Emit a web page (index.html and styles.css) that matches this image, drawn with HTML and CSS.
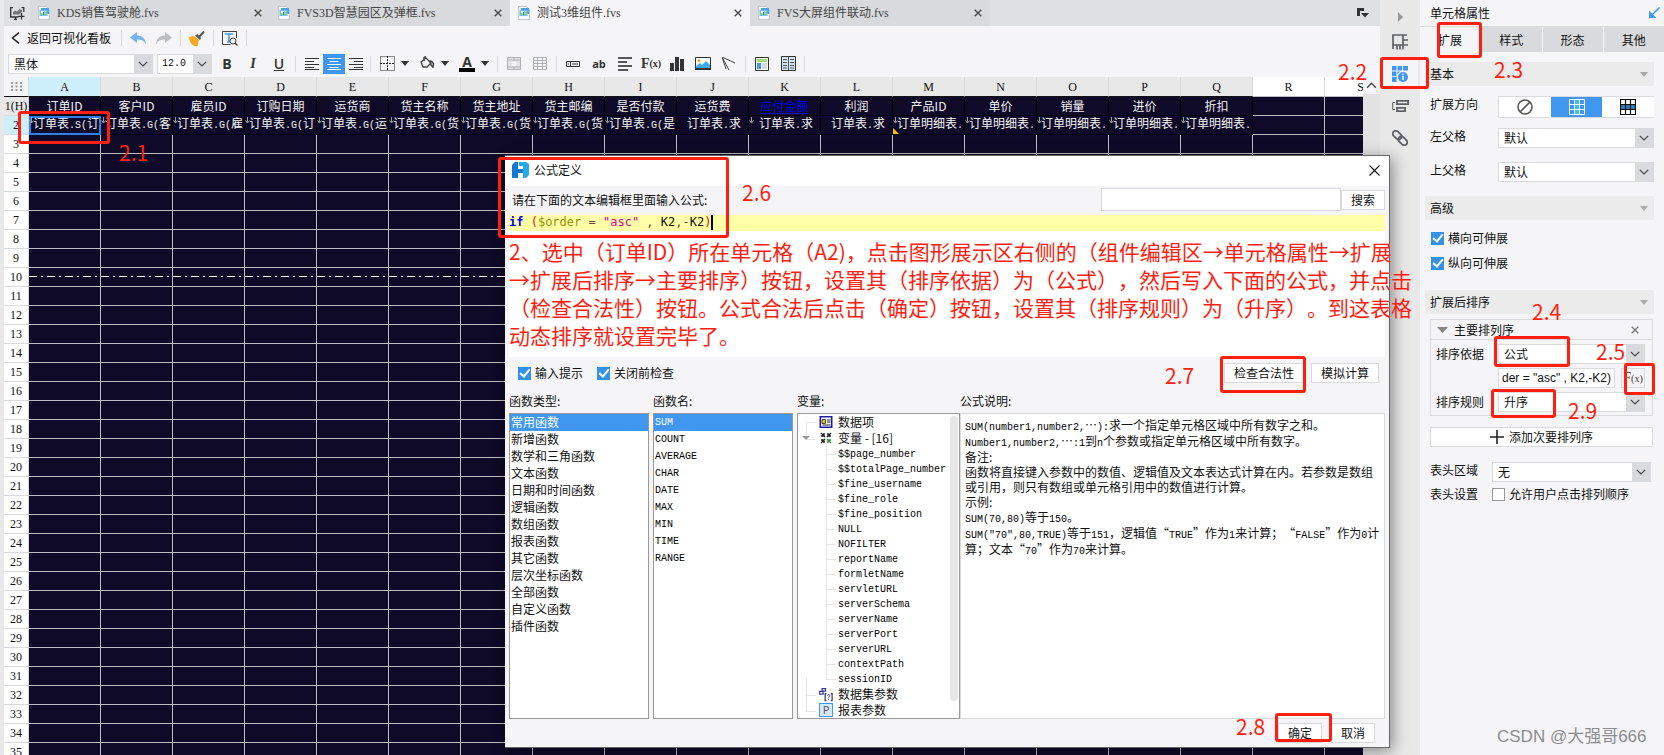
FILE: index.html
```
<!DOCTYPE html>
<html lang="zh-CN">
<head>
<meta charset="utf-8">
<title>公式定义</title>
<link rel="stylesheet" href="styles.css">
</head>
<body>
<svg class="defs" aria-hidden="true">
  <symbol id="file" viewBox="0 0 12 14"><path d="M.5.5h8l3 3v10H.5z" fill="#f7f8fa" stroke="#c3c6cc"/><path d="M3 2h8v6H3z" fill="#4aa3e0"/><path d="M1.500 4h8v6h-8z" fill="#6fc0f0"/><path d="M3 5h5v4H3z" fill="#e8f5e4"/><path d="M3.500 7h1v2h-1zM5 6h1v3H5zM6.500 5.500h1V9h-1z" fill="#35a853"/></symbol>
  <symbol id="x" viewBox="0 0 8 8"><path d="M.7.7l6.600 6.600M7.300.7L.7 7.300" fill="none" stroke="currentColor" stroke-width="1.300"/></symbol>
  <symbol id="chev" viewBox="0 0 10 6"><path d="M.8.8L5 5 9.200.8" fill="none" stroke="#444" stroke-width="1.200"/></symbol>
  <symbol id="tri" viewBox="0 0 8 5"><path d="M0 0h8L4 5z" fill="currentColor"/></symbol>
</svg>

<div class="app">
  <div class="main">
    <div class="tabs">
      <button class="newtab" aria-label="新建"><svg width="15" height="13" viewBox="0 0 15 13"><path d="M3 .7H.7V10H3M11.500.7h2.300V5M4 12.300h3M5.500 10v2" fill="none" stroke="#333" stroke-width="1.300"/><path d="M3 10h5.500M11.500 6v6.500M8.500 9.300h6" fill="none" stroke="#333" stroke-width="1.300"/><path d="M3 7.500V5l2-1.500 2 1 2.500-2.500L12 3v2L9 7.500z" fill="#777"/></svg></button>
      <div class="tab"><svg width="12" height="14"><use href="#file"/></svg><span>KDS销售驾驶舱.fvs</span><button aria-label="关闭"><svg width="8" height="8"><use href="#x"/></svg></button></div>
      <div class="tab"><svg width="12" height="14"><use href="#file"/></svg><span>FVS3D智慧园区及弹框.fvs</span><button aria-label="关闭"><svg width="8" height="8"><use href="#x"/></svg></button></div>
      <div class="tab on"><svg width="12" height="14"><use href="#file"/></svg><span>测试3维组件.fvs</span><button aria-label="关闭"><svg width="8" height="8"><use href="#x"/></svg></button></div>
      <div class="tab"><svg width="12" height="14"><use href="#file"/></svg><span>FVS大屏组件联动.fvs</span><button aria-label="关闭"><svg width="8" height="8"><use href="#x"/></svg></button></div>
      <button class="tablist" aria-label="标签列表"><svg width="13" height="10" viewBox="0 0 13 10"><path d="M0 0h7v3H3v5H0z" fill="#333"/><path d="M4 5h8L8 9.500z" fill="#333"/></svg></button>
    </div>
    <div class="bar bar1">
      <button class="back"><svg width="9" height="12" viewBox="0 0 9 12"><path d="M8 .7L1.500 6 8 11.300" fill="none" stroke="#222" stroke-width="1.500"/></svg>返回可视化看板</button>
      <i class="sep"></i>
      <button aria-label="撤销"><svg width="16" height="13" viewBox="0 0 16 13"><path d="M0 5.500L7 0v3.500c5 0 8.500 3 9 9-2-4-4.500-5-9-5V11z" fill="#74b3f2"/></svg></button>
      <button aria-label="重做"><svg width="16" height="13" viewBox="0 0 16 13"><path d="M16 5.500L9 0v3.500c-5 0-8.500 3-9 9 2-4 4.500-5 9-5V11z" fill="#bcbdbf"/></svg></button>
      <i class="sep"></i>
      <button aria-label="格式刷"><svg width="16" height="15" viewBox="0 0 16 15"><path d="M0 6l5-1 5 4-1.500 6H5C2 13 0 10 0 6z" fill="#f5ab1c"/><path d="M6 4.500l5 4.500 1-2-3.500-4z" fill="#555"/><path d="M10 6l5-5.500" stroke="#555" stroke-width="2"/></svg></button>
      <i class="sep"></i>
      <button aria-label="预览"><svg width="16" height="15" viewBox="0 0 16 15"><path d="M14.500 7V.5H.5v13h8" fill="none" stroke="#444"/><path d="M3 3h8M7 3v8M5 11h3" stroke="#3f97f0" stroke-width="1.500"/><circle cx="11" cy="10" r="3" fill="none" stroke="#444"/><path d="M13 12l2.500 2.500" stroke="#444" stroke-width="1.500"/></svg></button>
      <i class="sep"></i>
    </div>
    <div class="bar bar2">
      <div class="combo font"><select aria-label="字体"><option>黑体</option></select><svg width="10" height="6"><use href="#chev"/></svg></div>
      <div class="combo size"><select aria-label="字号"><option>12.0</option></select><svg width="10" height="6"><use href="#chev"/></svg></div>
      <button class="ic bold">B</button><button class="ic ital">I</button><button class="ic und">U</button>
      <i class="sep"></i>
      <div class="align">
      <button class="sm" aria-label="左对齐"><svg width="14" height="12" viewBox="0 0 14 12"><path d="M0 .5h14M0 3.500h9M0 6.500h14M0 9.500h9M0 11.500h14" stroke="#333"/></svg></button>
      <button class="sm on" aria-label="居中"><svg width="14" height="12" viewBox="0 0 14 12"><path d="M0 .5h14M2.500 3.500h9M0 6.500h14M2.500 9.500h9M0 11.500h14" stroke="#fff"/></svg></button>
      <button class="sm" aria-label="右对齐"><svg width="14" height="12" viewBox="0 0 14 12"><path d="M0 .5h14M5 3.500h9M0 6.500h14M5 9.500h9M0 11.500h14" stroke="#333"/></svg></button>
      </div>
      <i class="sep"></i>
      <button class="pair" aria-label="边框"><svg width="15" height="15" viewBox="0 0 15 15"><path d="M.5.5h14v14H.5z" fill="none" stroke="#222" stroke-dasharray="1 1"/><path d="M0 7.500h15M7.500 0v15" stroke="#222" stroke-dasharray="2 1"/></svg><svg class="dk" width="8" height="5"><use href="#tri"/></svg></button>
      <button class="pair" aria-label="填充"><svg width="16" height="16" viewBox="0 0 16 16"><path d="M0 12h16v4H0z" fill="#fff"/><path d="M2 6l5-4 5 5-4 4H4z" fill="none" stroke="#444" stroke-width="1.300"/><path d="M5 5V1.500L7 .5M11 5c3 0 4 3 3 6l-2-2z" fill="none" stroke="#444" stroke-width="1.500"/></svg><svg class="dk" width="8" height="5"><use href="#tri"/></svg></button>
      <button class="pair" aria-label="字体颜色"><span class="fc">A</span><svg class="dk" width="8" height="5"><use href="#tri"/></svg></button>
      <i class="sep"></i>
      <button class="ic" aria-label="合并"><svg width="14" height="13" viewBox="0 0 14 13"><path d="M.5.5h13v12H.5z" fill="#e3e3e5" stroke="#b0b1b3"/><path d="M.5 3h13M.5 10h13M7 .5V3M7 10v2.500" stroke="#b0b1b3"/><path d="M5 5.500h3.500V8.500H5.500V7h3" fill="none" stroke="#fff"/></svg></button>
      <button class="ic" aria-label="拆分"><svg width="14" height="13" viewBox="0 0 14 13"><path d="M.5.5h13v12H.5zM.5 3.500h13M.5 6.500h13M.5 9.500h13M4.500.5v12M9.500.5v12" fill="none" stroke="#b0b1b3"/></svg></button>
      <i class="sep"></i>
      <button class="ic" aria-label="控件"><svg width="14" height="6" viewBox="0 0 14 6"><path d="M.5.5h13v5H.5zM4.500 0v6M6 3h6M2 3h1" fill="none" stroke="#333"/></svg></button>
      <button class="ic ab">ab</button>
      <button class="ic" aria-label="富文本"><svg width="14" height="14" viewBox="0 0 14 14"><path d="M0 1h14M0 5h9M0 9h14M0 13h10" stroke="#222" stroke-width="1.600"/></svg></button>
      <button class="ic fx">F<small>(x)</small></button>
      <button class="ic" aria-label="图表"><svg width="14" height="14" viewBox="0 0 14 14"><path d="M0 6h4v8H0zM5 0h4v14H5zM10 2h4v12h-4z" fill="#333"/></svg></button>
      <button class="ic" aria-label="图片"><svg width="16" height="13" viewBox="0 0 16 13"><path d="M.5.5h15v12H.5z" fill="#fff" stroke="#333"/><path d="M1 11V9l4-3 2 2 4-4 4 4v3z" fill="#3ea8f5"/><circle cx="4" cy="3.500" r="1.500" fill="#f5a623"/><path d="M0 11h16v2H0z" fill="#333"/></svg></button>
      <button class="ic" aria-label="斜线"><svg width="14" height="14" viewBox="0 0 14 14"><path d="M0 0l13 6M0 0l7 13M0 0l4 12" fill="none" stroke="#444"/></svg></button>
      <i class="sep"></i>
      <button class="ic" aria-label="模板"><svg width="14" height="14" viewBox="0 0 14 14"><path d="M.5.5h13v13H.5z" fill="#fff" stroke="#333"/><path d="M2 2h10v3H2z" fill="#a3d977"/><path d="M2 6h4v6H2z" fill="#3f97f0"/><path d="M7 6h5v6H7z" fill="#d8d9dc"/></svg></button>
      <button class="ic" aria-label="分栏"><svg width="15" height="15" viewBox="0 0 15 15"><path d="M.5.5h14v14H.5z" fill="#d3e4fb" stroke="#333"/><path d="M7.500 1v13M2 3.500h4M2 6.500h4M2 9.500h4M9 3.500h4M9 6.500h4M9 9.500h4M2 12h4M9 12h4" stroke="#555"/></svg></button>
      <i class="sep"></i>
    </div>
    <div class="gridwrap">
      <div class="gridclip"><table class="grid" id="grid"></table></div>
      <div class="vscroll"><svg width="10" height="6" viewBox="0 0 10 6"><path d="M1 5l4-4 4 4" fill="none" stroke="#444" stroke-width="1.200"/></svg></div>
    </div>
  </div>

  <nav class="strip">
    <button class="fold" aria-label="收起"><svg width="5" height="10" viewBox="0 0 5 10"><path d="M0 0l5 5-5 5z" fill="#999"/></svg></button>
    <button aria-label="组件设置"><svg width="16" height="16" viewBox="0 0 16 16"><path d="M1 15V1h14M11 1v10H1M11 6h5M11 11h5M5 11v4.500M8 11v4.500M11 11v4.500" fill="none" stroke="#5c6066" stroke-width="1.700"/></svg></button>
    <button class="on" aria-label="单元格属性"><svg width="16" height="16" viewBox="0 0 16 16"><path d="M0 0h4.500v4.500H0zM5.500 0H10v4.500H5.500zM11 0h5v4.500h-5zM0 5.500h4.500V10H0zM0 11h4.500v5H0zM5.500 5.500H8L5.500 8z" fill="#3f97f0"/><circle cx="11" cy="11" r="5" fill="#3f97f0"/><path d="M11 7.500v1.300M11 9.700v4" stroke="#fff" stroke-width="1.500"/></svg></button>
    <button aria-label="控件设置"><svg width="17" height="12" viewBox="0 0 17 12"><path d="M4.900.9h11.200v3.200H4.900zM4.900 7.900h8.200v3.200H4.900z" fill="none" stroke="#5c6066" stroke-width="1.700"/><path d="M3 2.500H.7v7H3" fill="none" stroke="#5c6066"/></svg></button>
    <button aria-label="超级链接"><svg width="16" height="16" viewBox="0 0 16 16"><g transform="rotate(45 8 8)" fill="none" stroke="#5c6066" stroke-width="1.800"><rect x="-1" y="5" width="10" height="6" rx="3"/><rect x="7" y="5" width="10" height="6" rx="3"/></g></svg></button>
  </nav>

  <aside class="panel">
    <div class="ptitle"><span>单元格属性</span><svg width="12" height="12" viewBox="0 0 12 12"><path d="M11.500.5L3 9" stroke="#3f97f0" stroke-width="1.500"/><path d="M1 3.500V11h7.500z" fill="#3f97f0"/></svg></div>
    <div class="ptabs"><button class="on">扩展</button><button>样式</button><button>形态</button><button>其他</button></div>
    <div class="psec s1">基本<svg width="8" height="5"><use href="#tri"/></svg></div>
    <div class="prow dir"><span class="lab">扩展方向</span>
      <div class="seg"><button aria-label="不扩展"><svg width="16" height="16" viewBox="0 0 16 16"><circle cx="8" cy="8" r="7" fill="none" stroke="#555" stroke-width="1.600"/><path d="M3 13L13 3" stroke="#555" stroke-width="1.600"/></svg></button><button class="on" aria-label="纵向"><svg width="16" height="16" viewBox="0 0 16 16"><path d="M5.500 0h5v16h-5z" fill="#35c0f8"/><path d="M.5.5h15v15H.5zM.5 5.500h15M.5 10.500h15M5.500.5v15M10.500.5v15" fill="none" stroke="#fff"/></svg></button><button aria-label="横向"><svg width="16" height="16" viewBox="0 0 16 16"><path d="M0 5.500h16v5H0z" fill="#2b7fb8"/><path d="M.5.5h15v15H.5zM.5 5.500h15M.5 10.500h15M5.500.5v15M10.500.5v15" fill="none" stroke="#111" stroke-width="1.200"/></svg></button></div></div>
    <div class="prow"><label class="lab" for="lp">左父格</label><div class="combo"><select id="lp"><option>默认</option></select><svg width="10" height="6"><use href="#chev"/></svg></div></div>
    <div class="prow"><label class="lab" for="tp">上父格</label><div class="combo"><select id="tp"><option>默认</option></select><svg width="10" height="6"><use href="#chev"/></svg></div></div>
    <div class="psec s2">高级<svg width="8" height="5"><use href="#tri"/></svg></div>
    <div class="pchecks"><label><input type="checkbox" checked>横向可伸展</label><label><input type="checkbox" checked>纵向可伸展</label></div>
    <div class="psec s3">扩展后排序<svg width="8" height="5"><use href="#tri"/></svg></div>
    <div class="box">
      <div class="boxh"><svg width="11" height="6" viewBox="0 0 8 5" preserveAspectRatio="none"><path d="M0 0h8L4 5z" fill="#888"/></svg><span>主要排列序</span><button aria-label="删除"><svg width="8" height="8"><use href="#x"/></svg></button></div>
      <div class="brow"><label class="lab" for="sb">排序依据</label><div class="combo"><select id="sb"><option>公式</option></select><svg width="10" height="6"><use href="#chev"/></svg></div></div>
      <div class="brow"><span class="lab"></span><input class="ftext" aria-label="公式" value='der = "asc" , K2,-K2)'><button class="fxb">F<small>(x)</small></button></div>
      <div class="brow"><label class="lab" for="sr">排序规则</label><div class="combo"><select id="sr"><option>升序</option></select><svg width="10" height="6"><use href="#chev"/></svg></div></div>
    </div>
    <button class="add"><svg width="14" height="14" viewBox="0 0 14 14"><path d="M0 7h14M7 0v14" stroke="#222" stroke-width="1.600"/></svg>添加次要排列序</button>
    <div class="prow hd"><label class="lab" for="ha">表头区域</label><div class="combo"><select id="ha"><option>无</option></select><svg width="10" height="6"><use href="#chev"/></svg></div></div>
    <div class="prow hd2"><span class="lab">表头设置</span><label><input type="checkbox">允许用户点击排列顺序</label></div>
  </aside>
</div>

<section class="dialog">
  <header class="dhead"><svg width="17" height="17" viewBox="0 0 17 17"><path d="M0 3l3-3h3v16H0z" fill="#1277d3"/><path d="M5 7h6v4H5z" fill="#1277d3"/><path d="M7 0h7l3 2v11l-3 3h-3V4H7z" fill="#27a9ea"/></svg><h1>公式定义</h1><button aria-label="关闭"><svg width="11" height="11" viewBox="0 0 11 11"><path d="M.5.5l10 10M10.500.5l-10 10" stroke="#111" stroke-width="1.100"/></svg></button></header>
  <div class="dprompt"><span>请在下面的文本编辑框里面输入公式:</span><input aria-label="搜索"><button class="btn">搜索</button></div>
  <div class="editor"><div class="code"><b>if</b> <i class="p">(</i><i class="v">$order</i> <i class="o">=</i> <i class="s">"asc"</i> <i class="o">,</i> K2<i class="o">,-</i>K2<i class="p">)</i><i class="caret"></i></div></div>
  <div class="dopts"><label><input type="checkbox" checked>输入提示</label><label><input type="checkbox" checked>关闭前检查</label><button class="btn first">检查合法性</button><button class="btn">模拟计算</button></div>
  <div class="dcols">
    <div class="col c1"><h2>函数类型:</h2><ul class="list"><li class="on">常用函数</li><li>新增函数</li><li>数学和三角函数</li><li>文本函数</li><li>日期和时间函数</li><li>逻辑函数</li><li>数组函数</li><li>报表函数</li><li>其它函数</li><li>层次坐标函数</li><li>全部函数</li><li>自定义函数</li><li>插件函数</li></ul></div>
    <div class="col c1"><h2>函数名:</h2><ul class="list m"><li class="on">SUM</li><li>COUNT</li><li>AVERAGE</li><li>CHAR</li><li>DATE</li><li>MAX</li><li>MIN</li><li>TIME</li><li>RANGE</li></ul></div>
    <div class="col c3"><h2>变量:</h2>
      <div class="treebox"><ul class="tree">
        <li class="top"><svg width="13" height="12" viewBox="0 0 13 12"><path d="M.8.8h11.400v10.400H.8z" fill="#fff" stroke="#1c1ca8" stroke-width="1.600"/><path d="M2.500 3.500h3.500v4H2.500z" fill="#e8c800" stroke="#222" stroke-width=".8"/><path d="M7.500 4h3.500M7.500 6h3.500M3 9h8" stroke="#222"/></svg>数据项</li>
        <li class="top open"><svg width="12" height="12" viewBox="0 0 12 12"><path d="M1 1l4 4M1 4h3V1M11 1L7 5M8 1v3h3M1 11l4-4M1 8h3v3" fill="none" stroke="#222" stroke-width="1.400"/><path d="M11 11L7 7M8 11V8h3" fill="none" stroke="#3a8a3a" stroke-width="1.400"/></svg><span>变量 - [16]</span></li>
        <li class="m">$$page_number</li><li class="m">$$totalPage_number</li><li class="m">$fine_username</li><li class="m">$fine_role</li><li class="m">$fine_position</li><li class="m">NULL</li><li class="m">NOFILTER</li><li class="m">reportName</li><li class="m">formletName</li><li class="m">servletURL</li><li class="m">serverSchema</li><li class="m">serverName</li><li class="m">serverPort</li><li class="m">serverURL</li><li class="m">contextPath</li><li class="m last">sessionID</li>
        <li class="top"><svg width="16" height="15" viewBox="0 0 16 15"><path d="M3.500.7h4v3h-4zM.7 4h4v3h-4z" fill="#fff" stroke="#3a3a9a" stroke-width="1.400"/><path d="M8.500 6.500H7v8h1.500M13.500 6.500H15v8h-1.500" fill="none" stroke="#333" stroke-width="1.300"/><path d="M9.500 9c0-2 3.200-1.800 3 0-.2 1-1.500 1-1.500 2.300M11 12.500v1.200" fill="none" stroke="#3a3a9a" stroke-width="1.100"/></svg>数据集参数</li>
        <li class="top"><span class="pbox">P</span>报表参数</li>
      </ul><div class="thumb"></div></div>
    </div>
    <div class="col c4"><h2>公式说明:</h2>
      <div class="desc"><span class="m">SUM(number1,number2,</span>…<span class="m">):</span>求一个指定单元格区域中所有数字之和。<br><span class="m">Number1,number2,</span>…<span class="m">:1</span>到<span class="m">n</span>个参数或指定单元格区域中所有数字。<br>备注:<br>函数将直接键入参数中的数值、逻辑值及文本表达式计算在内。若参数是数组<br>或引用，则只有数组或单元格引用中的数值进行计算。<br>示例:<br><span class="m">SUM(70,80)</span>等于<span class="m">150</span>。<br><span class="m">SUM("70",80,TRUE)</span>等于<span class="m">151</span>，逻辑值“<span class="m">TRUE</span>”作为<span class="m">1</span>来计算；“<span class="m">FALSE</span>”作为<span class="m">0</span>计<br>算；文本“<span class="m">70</span>”作为<span class="m">70</span>来计算。</div>
    </div>
  </div>
  <footer class="dfoot"><button class="btn">确定</button><button class="btn">取消</button></footer>
</section>

<div class="notes">
  <p class="note para">2、选中（订单ID）所在单元格（A2)，点击图形展示区右侧的（组件编辑区→单元格属性→扩展<br>→扩展后排序→主要排序）按钮，设置其（排序依据）为（公式），然后写入下面的公式，并点击<br>（检查合法性）按钮。公式合法后点击（确定）按钮，设置其（排序规则）为（升序）。到这表格<br>动态排序就设置完毕了。</p>
  <i class="mark k1"></i><span class="note n1">2.1</span>
  <i class="mark k2"></i><span class="note n2">2.2</span>
  <i class="mark k3"></i><span class="note n3">2.3</span>
  <i class="mark k4"></i><span class="note n4">2.4</span>
  <i class="mark k5"></i><span class="note n5">2.5</span>
  <i class="mark k6"></i><span class="note n6">2.6</span>
  <i class="mark k7"></i><span class="note n7">2.7</span>
  <i class="mark k8"></i><span class="note n8">2.8</span>
  <i class="mark k9"></i><span class="note n9">2.9</span>
  <span class="wm">CSDN @大强哥666</span>
</div>
<script src="grid.js"></script>
</body>
</html>
```

FILE: grid.js
```
const letters = 'ABCDEFGHIJKLMNOPQRS'.split('');
const heads = ['订单ID', '客户ID', '雇员ID', '订购日期', '运货商', '货主名称', '货主地址', '货主邮编', '是否付款', '运货费', '<a href="#">应付金额</a>', '利润', '产品ID', '单价', '销量', '进价', '折扣'];
const vals = ['<b>.S(</b>订', '<b>.G(</b>客', '<b>.G(</b>雇', '<b>.G(</b>订', '<b>.G(</b>运', '<b>.G(</b>货', '<b>.G(</b>货', '<b>.G(</b>货', '<b>.G(</b>是', '<b>.</b>求', '<b>.</b>求', '<b>.</b>求'].map(t => '订单表' + t);
while (vals.length < 17) vals.push('订单明细表<b>.</b>');

const arrow = '<svg class="arr" width="5" height="7" viewBox="0 0 5 7"><path d="M2.500 0v6M.5 3.500l2 2.500 2-2.500" fill="none" stroke="#999"/></svg>';
const dots = '<svg width="11" height="9" viewBox="0 0 11 9"><path d="M0 1h11M0 4.500h11M0 8h11" stroke="#999" stroke-width="2" stroke-dasharray="2 2.500"/></svg>';

let html = '<colgroup><col class="rh">' + '<col>'.repeat(letters.length) + '</colgroup><thead><tr><th>' + dots + '</th>';
letters.forEach((l, i) => { html += `<th class="${i === 0 ? 'sel' : i > 16 ? 'free' : ''}">${l}</th>`; });
html += '</tr></thead><tbody>';
for (let r = 1; r <= 35; r++) {
  html += `<tr class="r${r}"><th>${r === 1 ? '1(H)' : r}</th>`;
  letters.forEach((l, i) => {
    let text = '';
    if (i < 17 && r === 1) text = heads[i];
    if (i < 17 && r === 2) text = (i === 9 || i === 11 ? '' : arrow) + vals[i];
    html += `<td class="${text ? 'full' : ''}${r === 2 && i === 0 ? ' cur' : ''}${r === 2 && i === 12 ? ' flag' : ''}">${text}</td>`;
  });
  html += '</tr>';
}
document.getElementById('grid').innerHTML = html + '</tbody>';
```

FILE: styles.css
```
* { box-sizing: border-box; }
body { margin: 0; height: 100vh; overflow: hidden; position: relative; font: 12px/16px "Noto Sans CJK SC", sans-serif; color: #111; background: #e8e8e8; text-spacing-trim: space-all; }
button, input, select { font: inherit; color: inherit; margin: 0; padding: 0; border: 0; background: none; border-radius: 0; }
button { display: flex; align-items: center; justify-content: center; white-space: nowrap; }
select { appearance: none; }
svg { display: block; flex: none; }
ul, h1, h2, p { margin: 0; padding: 0; font-size: 12px; font-weight: 400; list-style: none; }
.defs { position: absolute; width: 0; height: 0; }
.m { font-family: "Liberation Mono", monospace; font-size: 10px; color: #000; }
span.m { line-height: 1; }

.app { display: flex; height: 100vh; padding-left: 4px; }
.main { flex: 1; min-width: 0; display: flex; flex-direction: column; background: #f5f5f7; }

.tabs { display: flex; height: 26px; background: #dfe0e2; color: #444; }
.newtab { width: 26px; }
.tab { width: 240px; display: flex; align-items: center; gap: 6px; padding: 0 8px; background: #d9dadd; font-family: "Liberation Serif", "Noto Sans CJK SC", serif; }
.tab span { flex: 1; padding-left: 1px; }
.tab.on { background: #f5f5f7; }
.tablist { margin: 0 10px 0 auto; }

.bar { display: flex; align-items: center; padding: 0 4px; }
.sep { width: 1px; height: 16px; background: #d9dadd; }
.bar1 { height: 24px; gap: 8px; padding-left: 7px; }
.back { gap: 7px; margin-right: 2px; }
.bar1 button + button { margin-left: 2px; }
.bar2 { height: 27px; }
.bar2 .sep { margin: 0 3px; }
.align { display: flex; padding-left: 2px; }
.combo { display: flex; align-items: center; height: 20px; background: #d9dadd; border: 1px solid #d9dadd; flex: 1; min-width: 0; }
.combo select { flex: 1; min-width: 0; height: 18px; background: #fff; padding-left: 5px; }
.combo svg { margin: 0 4px; }
.font { flex: 0 0 145px; margin-right: 4px; }
.size { flex: 0 0 55px; margin-right: 2px; }
.size select { font-family: "Liberation Mono", monospace; font-size: 10px; padding-left: 4px; }
.ic { width: 26px; height: 20px; color: #333; }
.bold { font: 700 14px "Open Sans", sans-serif; }
.ital { font: italic 700 14px "Liberation Serif", serif; }
.und { font: 600 14px "Open Sans", sans-serif; text-decoration: underline; }
.ab { font: 700 11px "Open Sans", sans-serif; }
.fx, .fxb { font: 700 14px "Liberation Serif", serif; color: #333; }
.fx small, .fxb small { font-size: 10px; }
.sm { width: 22px; height: 20px; }
.sm.on { background: #3f97f0; }
.pair { width: 40px; gap: 6px; }
.dk { color: #333; }
.fc { font: 700 14px/13px "Open Sans", sans-serif; color: #333; width: 16px; border-bottom: 4px solid #000; }

.gridwrap { flex: 1; display: flex; min-height: 0; }
.gridclip { flex: 1; min-width: 0; overflow: hidden; background: #0f0a28; }
.grid { width: 1393px; table-layout: fixed; border-spacing: 0; }
.grid col { width: 72px; }
.grid col.rh { width: 25px; }
.grid th, .grid td { padding: 0; height: 19px; line-height: 17px; border: 0 solid #bdbdc2; border-width: 0 1px 1px 0; white-space: nowrap; overflow: hidden; text-align: center; }
.grid th { font: 12px/18px "Liberation Serif", serif; background: #fff; border-color: #d9dadd; }
.grid th svg { margin: 0 auto; }
.grid thead th { height: 20px; background: #e8e8e8; border-bottom-color: #111; }
.grid thead th.free { background: #fff; border-bottom-color: #bdbdc2; }
.grid thead th:first-child { background: #f5f5f7; }
.grid thead th.sel, .grid .r2 th { background: #cdeefb; }
.grid .r1 th { background: #e8e8e8; }
.grid td.full { position: relative; color: #f2f2f2; border-color: #000; vertical-align: top; }
.grid .r2 td.full { line-height: 14px; padding-left: 3px; }
.grid td b { font: 10px/1 "Liberation Mono", monospace; }
.grid a { color: #0000e6; text-underline-offset: 2px; }
.arr { position: absolute; left: 0; top: 1px; }
.grid td.cur { outline: 2px solid #2f80ed; outline-offset: -2px; }
.flag::after { content: ""; position: absolute; left: 0; bottom: 0; border: 3px solid #ffc20e; border-top-color: transparent; border-right-color: transparent; }
.grid .r10 td { background: linear-gradient(90deg, #fff 0 8px, transparent 8px 12px, #fff 12px 14px, transparent 14px) 0 8px / 18px 1px repeat-x; }
.vscroll { width: 17px; background: #e2e2e2; }
.vscroll svg { width: 17px; height: 17px; padding: 5px 3px; background: #f5f5f7; }

.strip { width: 40px; display: flex; flex-direction: column; gap: 4px; align-items: center; background: #e8e8e8; padding-top: 4px; }
.strip button { width: 36px; height: 28px; }
.strip .fold { height: 20px; padding-top: 6px; }
.strip .on { background: #f5f5f7; }

.panel { width: 244px; background: #f5f5f7; padding-right: 10px; }
.ptitle { height: 26px; display: flex; justify-content: space-between; align-items: center; padding: 0 0 0 10px; margin-right: -6px; }
.ptabs { display: flex; gap: 1px; height: 26px; margin-right: -10px; border-top: 1px solid #d9dadd; }
.ptabs button { flex: 1; background: #d9dadd; }
.ptabs .on { background: #f5f5f7; }
.psec { display: flex; align-items: center; justify-content: space-between; height: 24px; margin-left: 5px; padding: 0 6px 0 5px; background: #ebebec; }
.psec svg { color: #aaa; }
.s1 { margin-top: 10px; }
.prow { display: flex; align-items: center; height: 20px; margin: 14px 0 0 10px; }
.prow .lab { width: 68px; align-self: flex-start; line-height: 15px; }
.prow.dir { height: 22px; margin-top: 10px; }
.dir + .prow { margin-top: 10px; }
.seg { flex: 1; display: flex; height: 22px; border: 1px solid #d9dadd; border-right: 0; background: #fff; }
.seg button { flex: 1; }
.seg .on { background: #3f97f0; }
.s2 { margin-top: 14px; }
.pchecks { margin: 10px 0 0 11px; }
.pchecks label { height: 16px; margin-bottom: 9px; }
label:has(input) { display: flex; align-items: center; gap: 4px; }
input[type=checkbox] { appearance: none; width: 13px; height: 13px; border: 1px solid #999; background: #fff; display: grid; place-items: center; }
input[type=checkbox]:checked { background: #3391ea; border-color: #3391ea; }
input[type=checkbox]:checked::before { content: ""; width: 8px; height: 4px; margin-bottom: 3px; border: 2px solid #fff; border-top: 0; border-right: 0; transform: rotate(-50deg); }
.s3 { margin-top: 19px; }
.box { margin: 5px 1px 0 10px; border: 1px solid #d9dadd; padding-bottom: 3px; }
.boxh { display: flex; align-items: center; height: 20px; gap: 6px; padding: 0 13px 0 6px; border-bottom: 1px solid #d9dadd; }
.boxh span { flex: 1; }
.boxh button { color: #777; }
.brow { display: flex; align-items: center; height: 20px; margin: 4px 7px 0 5px; }
.brow .lab { width: 62px; }
.ftext { flex: 1; min-width: 0; height: 20px; border: 1px solid #d9dadd; background: #fff; padding-left: 3px; font-family: "Liberation Sans", sans-serif; }
.fxb { width: 24px; height: 20px; border: 1px solid #d9dadd; margin-left: 6px; font-weight: 400; }
.add { width: 223px; height: 20px; margin: 11px 0 0 10px; gap: 5px; background: #fff; border: 1px solid #d9dadd; }
.prow.hd { margin: 15px 3px 0 10px; }
.prow.hd .lab, .prow.hd2 .lab { width: 62px; }
.prow.hd2 { height: 16px; margin-top: 4px; }

.dialog { position: absolute; left: 505px; top: 155px; width: 885px; height: 593px; display: flex; flex-direction: column; background: #f5f5f7; border: 1px solid #666; border-left: 0; box-shadow: 3px 3px 14px rgba(0, 0, 0, .4); }
.dhead { display: flex; align-items: center; height: 30px; padding: 0 9px 2px 7px; gap: 5px; background: #fff; }
.dhead h1 { flex: 1; }
.dprompt { display: flex; align-items: center; height: 29px; padding: 0 4px 2px 7px; }
.dprompt span { flex: 1; }
.dprompt input { width: 240px; height: 23px; background: #fff; border: 1px solid #d9dadd; }
.btn { height: 20px; padding: 0 9px; background: #fff; border: 1px solid #d9dadd; }
.editor { height: 142px; margin: 0 4px; background: #fff; }
.code { height: 16px; background: #ffffa8; font: 12px/14px "DejaVu Sans Mono", monospace; white-space: pre; }
.code i { font-style: normal; }
.code b { color: #00f; }
.code .p { color: #f00; }
.code .v { color: #949400; }
.code .o { color: #804040; }
.code .s { color: #dc009c; }
.code .caret { display: inline-block; width: 2px; height: 15px; background: #000; vertical-align: top; }
.dopts { display: flex; align-items: center; height: 34px; padding: 0 10px 2px 13px; gap: 14px; }
.dopts .first { margin-left: auto; }
.dopts .btn + .btn { margin-left: -7px; }
.dcols { flex: 1; display: flex; gap: 4px; padding: 0 4px; min-height: 0; }
.col { display: flex; flex-direction: column; min-width: 0; }
.col h2 { height: 22px; padding-top: 2px; }
.c1 { width: 140px; }
.c3 { width: 163px; }
.c4 { flex: 1; margin-left: -4px; }
.list, .treebox { flex: 1; background: #fff; border: 1px solid #999; }
.list li { height: 17px; line-height: 16px; padding-left: 1px; }
.list.m li { line-height: 17px; }
.list .on { background: #3f97f0; color: #fff; }
.treebox { position: relative; overflow: hidden; }
.tree li { position: relative; height: 15px; line-height: 17px; padding-left: 40px; }
.tree li.top { display: flex; align-items: center; gap: 5px; height: 16px; padding-left: 21px; white-space: pre; line-height: 16px; }
.tree .top svg { width: 14px; }
.tree li::before { content: ""; position: absolute; left: 28px; top: -8px; width: 9px; height: 16px; border: 1px solid #e6e6e6; border-top: 0; border-right: 0; }
.tree li.top::before { left: 8px; height: 17px; }
.tree li.top:first-child::before { top: 8px; border-bottom: 0; border-top: 1px solid #e6e6e6; }
.tree li.open::after { content: ""; position: absolute; left: 4px; top: 6px; border: 4px solid transparent; border-top-color: #999; }
.pbox { width: 14px; height: 14px; background: #d6e9fb; border: 1px solid #3f97f0; color: #555; font: 11px/12px "Open Sans", sans-serif; text-align: center; }
.thumb { position: absolute; right: 1px; top: 2px; width: 8px; height: 285px; border-radius: 4px; background: #e6e6e6; }
.desc { flex: 1; background: #fff; border: 1px solid #d9dadd; padding: 3px 4px; line-height: 15px; white-space: nowrap; }
.dfoot { display: flex; justify-content: flex-end; align-items: center; gap: 9px; height: 28px; padding: 0 14px 0 0; }

.notes { position: absolute; left: 0; top: 0; pointer-events: none; color: #ff1e10; }
.note, .wm, .mark { position: absolute; white-space: nowrap; }
.note { font-size: 21px; line-height: 28px; }
.mark { border: 3px solid #ff1e10; border-radius: 3px; }
.para { left: 509px; top: 237px; }
.k1 { left: 18px; top: 111px; width: 92px; height: 33px; }
.k2 { left: 1380px; top: 57px; width: 49px; height: 32px; }
.k3 { left: 1437px; top: 22px; width: 45px; height: 36px; }
.k4 { left: 1494px; top: 336px; width: 76px; height: 31px; }
.k5 { left: 1624px; top: 363px; width: 31px; height: 32px; }
.k6 { left: 498px; top: 157px; width: 231px; height: 81px; }
.k7 { left: 1220px; top: 356px; width: 86px; height: 37px; }
.k8 { left: 1275px; top: 713px; width: 57px; height: 29px; }
.k9 { left: 1491px; top: 389px; width: 65px; height: 29px; }
.n1 { left: 119px; top: 138px; }
.n2 { left: 1338px; top: 57px; }
.n3 { left: 1494px; top: 55px; }
.n4 { left: 1532px; top: 297px; }
.n5 { left: 1596px; top: 337px; }
.n6 { left: 742px; top: 178px; }
.n7 { left: 1165px; top: 361px; }
.n8 { left: 1236px; top: 712px; }
.n9 { left: 1568px; top: 396px; }
.wm { left: 1497px; top: 725px; font: 17px/24px "Liberation Sans", "Noto Sans CJK SC", sans-serif; color: #8c8c90; }
```
